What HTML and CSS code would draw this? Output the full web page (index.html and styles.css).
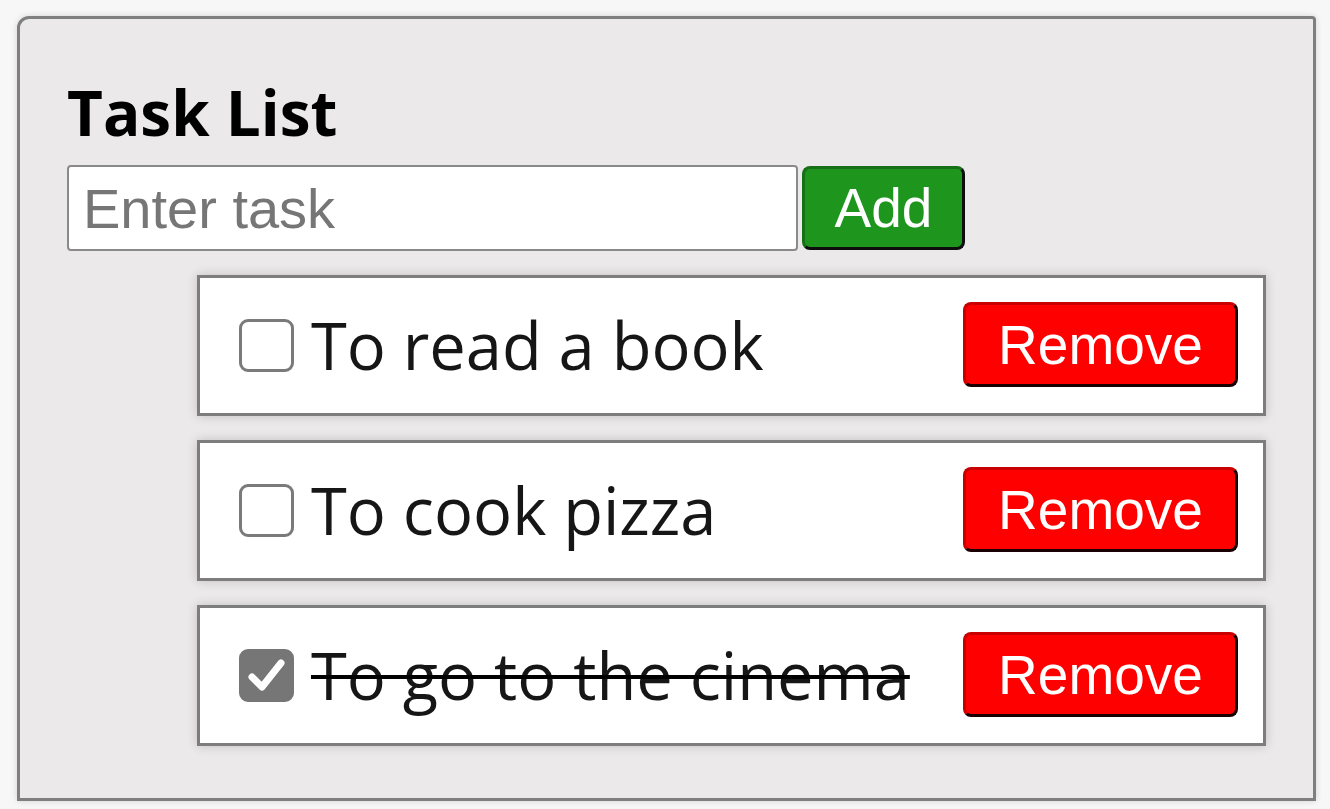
FILE: index.html
```html
<!DOCTYPE html>
<html>
<head>
<meta charset="utf-8">
<link rel="stylesheet" href="styles.css">
</head>
<body>
<div class="panel">
  <h2 class="title">Task List</h2>
  <div class="add-row">
    <input class="task-input" type="text" placeholder="Enter task">
    <button class="btn btn-add">Add</button>
  </div>
  <ul class="tasks">
    <li class="task">
      <span class="box"></span>
      <span class="label">To read a book</span>
      <button class="btn btn-remove">Remove</button>
    </li>
    <li class="task">
      <span class="box"></span>
      <span class="label">To cook pizza</span>
      <button class="btn btn-remove">Remove</button>
    </li>
    <li class="task done">
      <span class="box checked"><svg viewBox="0 0 55 55" width="55" height="55"><path d="M13 29 L23 39 L42 15" fill="none" stroke="#fff" stroke-width="7" stroke-linecap="round" stroke-linejoin="round"/></svg></span>
      <span class="label">To go to the cinema</span>
      <button class="btn btn-remove">Remove</button>
    </li>
  </ul>
</div>
</body>
</html>
```
FILE: styles.css
```css
html, body {
  margin: 0;
  padding: 0;
  background: #f7f7f7;
}
body {
  padding: 16px 14px 0 17px;
  height: 809px;
  box-sizing: border-box;
  overflow: hidden;
}
.panel {
  width: 1299px;
  height: 785px;
  box-sizing: border-box;
  background: #ebe9ea;
  border: 3px solid #7f7f7f;
  border-radius: 12px 4px 0 0;
  padding: 0 47px 0 47px;
  box-shadow: 0 0 6px rgba(0,0,0,0.15);
}
.title {
  margin: 0;
  padding-top: 53px;
  font-family: "Open Sans", sans-serif;
  font-weight: 700;
  font-size: 62px;
  line-height: 80px;
  color: #000;
}
.add-row {
  display: flex;
  gap: 4px;
  margin-top: 13px;
  align-items: center;
}
.task-input {
  width: 731px;
  height: 86px;
  box-sizing: border-box;
  border: 2px solid #8a8a8a;
  border-radius: 4px;
  background: #fff;
  padding: 0 14px;
  font-family: "Liberation Sans", Arial, sans-serif;
  font-size: 56px;
  color: #000;
  outline: none;
}
.task-input::placeholder {
  color: #767676;
}
.btn {
  font-family: "Liberation Sans", Arial, sans-serif;
  font-size: 55px;
  color: #fff;
  border-radius: 8px;
  border: 3px solid;
  padding: 0;
  cursor: pointer;
}
.btn-add {
  width: 163px;
  height: 84px;
  background: #1e961e;
  border-color: #176f17 #0d0d0d #0d0d0d #176f17;
}
.tasks {
  list-style: none;
  margin: 24px 0 0 130px;
  padding: 0;
  display: flex;
  flex-direction: column;
  gap: 24px;
}
.task {
  display: flex;
  align-items: center;
  height: 141px;
  box-sizing: border-box;
  border: 3px solid #7d7d7d;
  background: #fff;
  padding: 0 25px 0 39px;
  box-shadow: 0 0 10px rgba(0,0,0,0.18);
}
.box {
  width: 55px;
  height: 53px;
  box-sizing: border-box;
  border: 3px solid #7a7a7a;
  border-radius: 9px;
  background: #fff;
  flex: none;
  display: flex;
  align-items: center;
  justify-content: center;
  overflow: hidden;
}
.box.checked {
  background: #767676;
  border-color: #767676;
}
.box svg {
  flex: none;
}
.label {
  flex: 1;
  margin-left: 17px;
  font-family: "Open Sans", sans-serif;
  font-size: 65px;
  color: #161616;
  line-height: 1;
  white-space: nowrap;
}
.done .label {
  text-decoration: line-through;
  text-decoration-thickness: 4px;
  text-decoration-color: #000;
}
.btn-remove {
  width: 275px;
  height: 85px;
  background: #ff0000;
  border-color: #c80000 #1a0000 #1a0000 #c80000;
  margin-top: -2px;
}
```
